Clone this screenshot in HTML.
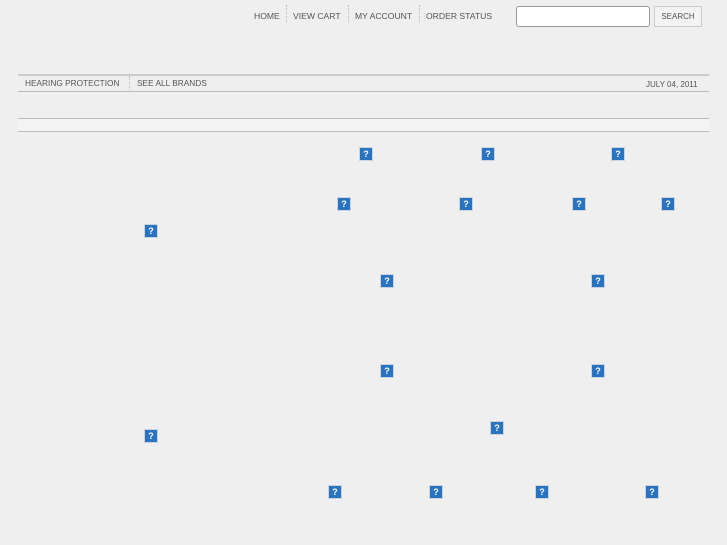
<!DOCTYPE html><html><head><style>
body{margin:0;background:#efefef;font-family:"Liberation Sans",sans-serif;width:727px;height:545px;position:relative;overflow:hidden}
.a{position:absolute;font-size:8.6px;color:#555;white-space:nowrap}
.sep{position:absolute;width:0;border-left:1px dotted #bbb}
.q{position:absolute;width:12px;height:12px;border:1px solid #c8d4e0;background:#2a73c0;color:#fff;font-size:9px;font-weight:bold;text-align:center;line-height:12px}
.l{position:absolute;left:18px;width:691px;height:1px;background:#bbb}
</style></head><body>
<div class="a" style="left:254px;top:11px">HOME</div>
<div class="sep" style="left:286px;top:5px;height:18px"></div>
<div class="a" style="left:293px;top:11px">VIEW CART</div>
<div class="sep" style="left:348px;top:5px;height:18px"></div>
<div class="a" style="left:355px;top:11px">MY ACCOUNT</div>
<div class="sep" style="left:419px;top:5px;height:18px"></div>
<div class="a" style="left:426px;top:11px">ORDER STATUS</div>
<div style="position:absolute;left:516px;top:6px;width:132px;height:19px;background:#fff;border:1px solid #999;border-radius:3px"></div>
<div style="position:absolute;left:654px;top:6px;width:46px;height:19px;background:#f3f3f3;border:1px solid #ccc;font-size:8px;color:#555;text-align:center;line-height:19px">SEARCH</div>
<div class="l" style="top:74px;height:2px;background:#ccc"></div>
<div class="a" style="left:25px;top:78px;font-size:8.3px">HEARING PROTECTION</div>
<div class="sep" style="left:129px;top:76px;height:14px"></div>
<div class="a" style="left:137px;top:78px;font-size:8.3px">SEE ALL BRANDS</div>
<div class="a" style="left:646px;top:80px;font-size:8px">JULY 04, 2011</div>
<div class="l" style="top:91px"></div>
<div class="l" style="top:118px"></div>
<div style="position:absolute;left:18px;top:119px;width:691px;height:12px;background:#f4f4f4"></div>
<div class="l" style="top:131px"></div>
<div class="q" style="left:359px;top:147px">?</div>
<div class="q" style="left:481px;top:147px">?</div>
<div class="q" style="left:611px;top:147px">?</div>
<div class="q" style="left:337px;top:197px">?</div>
<div class="q" style="left:459px;top:197px">?</div>
<div class="q" style="left:572px;top:197px">?</div>
<div class="q" style="left:661px;top:197px">?</div>
<div class="q" style="left:144px;top:224px">?</div>
<div class="q" style="left:380px;top:274px">?</div>
<div class="q" style="left:591px;top:274px">?</div>
<div class="q" style="left:380px;top:364px">?</div>
<div class="q" style="left:591px;top:364px">?</div>
<div class="q" style="left:490px;top:421px">?</div>
<div class="q" style="left:144px;top:429px">?</div>
<div class="q" style="left:328px;top:485px">?</div>
<div class="q" style="left:429px;top:485px">?</div>
<div class="q" style="left:535px;top:485px">?</div>
<div class="q" style="left:645px;top:485px">?</div>
</body></html>
